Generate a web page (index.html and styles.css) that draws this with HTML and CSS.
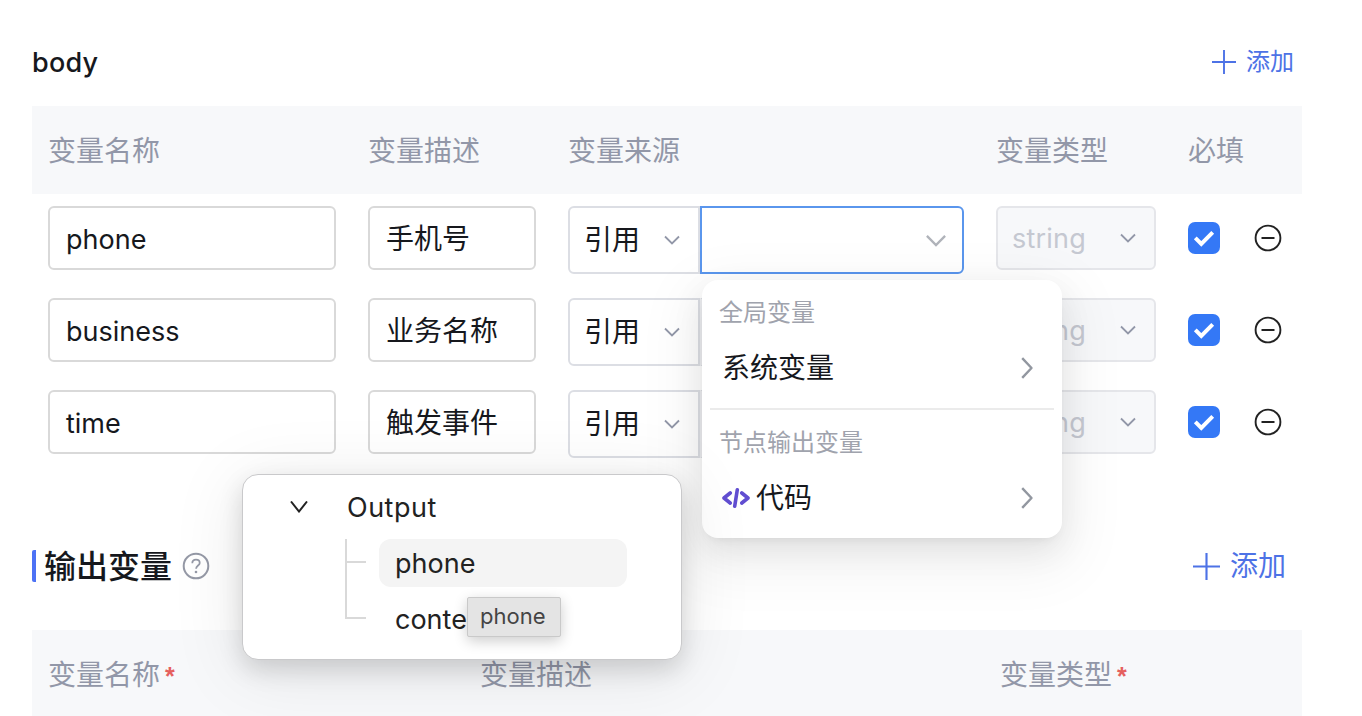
FILE: index.html
```html
<!DOCTYPE html>
<html lang="zh-CN">
  <head>
    <meta charset="utf-8">
    <title>输出变量</title>
    <link rel="stylesheet" href="styles.css">
  </head>
  <body>
    <svg width="0" height="0" class="sprite">
      <symbol id="down" viewBox="0 0 16 10"><path d="M1 1.5l7 7 7-7" fill="none" stroke="currentColor" stroke-width="1.8"/></symbol>
      <symbol id="right" viewBox="0 0 12 22"><path d="M1.2 1.2L10.5 11l-9.3 9.8" fill="none" stroke="currentColor" stroke-width="2.4" stroke-linejoin="round"/></symbol>
      <symbol id="plus" viewBox="0 0 24 24"><path d="M12 0v24M0 12h24" fill="none" stroke="currentColor" stroke-width="1.9"/></symbol>
      <symbol id="check" viewBox="0 0 32 32"><path d="M7.3 15.8l6 6L24.700 10.400" fill="none" stroke="#fff" stroke-width="4"/></symbol>
      <symbol id="minus" viewBox="0 0 28 28"><circle cx="14" cy="14" r="12.400" fill="none" stroke="currentColor" stroke-width="1.9"/><path d="M7.500 14h13" stroke="currentColor" stroke-width="2"/></symbol>
    </svg>

    <div class="section-head">
      <span class="name">body</span>
      <a class="add"><svg><use href="#plus"/></svg>添加</a>
    </div>
    <div class="grid thead">
      <div>变量名称</div><div>变量描述</div><div>变量来源</div><div>变量类型</div><div>必填</div><div></div>
    </div>
    <div class="grid row">
      <div><div class="input">phone</div></div>
      <div><div class="input zh">手机号</div></div>
      <div class="group">
        <div class="select kind">引用<svg class="down"><use href="#down"/></svg></div>
        <div class="select ref active"><svg class="down"><use href="#down"/></svg></div>
      </div>
      <div><div class="input type">string<svg class="down"><use href="#down"/></svg></div></div>
      <div><svg class="checkbox"><use href="#check"/></svg></div>
      <div><svg class="minus"><use href="#minus"/></svg></div>
    </div>
    <div class="grid row">
      <div><div class="input">business</div></div>
      <div><div class="input zh">业务名称</div></div>
      <div class="group">
        <div class="select kind">引用<svg class="down"><use href="#down"/></svg></div>
        <div class="select ref"></div>
      </div>
      <div><div class="input type">string<svg class="down"><use href="#down"/></svg></div></div>
      <div><svg class="checkbox"><use href="#check"/></svg></div>
      <div><svg class="minus"><use href="#minus"/></svg></div>
    </div>
    <div class="grid row">
      <div><div class="input">time</div></div>
      <div><div class="input zh">触发事件</div></div>
      <div class="group">
        <div class="select kind">引用<svg class="down"><use href="#down"/></svg></div>
        <div class="select ref"></div>
      </div>
      <div><div class="input type">string<svg class="down"><use href="#down"/></svg></div></div>
      <div><svg class="checkbox"><use href="#check"/></svg></div>
      <div><svg class="minus"><use href="#minus"/></svg></div>
    </div>

    <div class="section-head output">
      <h2>输出变量</h2>
      <svg class="help" viewBox="0 0 28 28"><circle cx="14" cy="14" r="12.300" fill="none" stroke="currentColor" stroke-width="2"/><path d="M10.300 11.300c0-2.300 1.600-3.700 3.700-3.700s3.700 1.400 3.700 3.300c0 2.700-3.600 2.700-3.600 5.900" fill="none" stroke="currentColor" stroke-width="1.800"/><circle cx="14" cy="20" r="1.300" fill="currentColor"/></svg>
      <a class="add"><svg><use href="#plus"/></svg>添加</a>
    </div>
    <div class="grid thead out">
      <div>变量名称<i>*</i></div><div>变量描述</div><div>变量类型<i>*</i></div>
    </div>

    <div class="menu">
      <div class="label">全局变量</div>
      <div class="item">系统变量<svg class="right"><use href="#right"/></svg></div>
      <hr>
      <div class="label">节点输出变量</div>
      <div class="item">
        <svg class="code" viewBox="0 0 28 20"><path d="M8.200 5L2 10l6.200 5M19.800 5L26 10l-6.200 5M15.300 1.800l-2.600 16.400" fill="none" stroke="currentColor" stroke-width="3.600" stroke-linecap="round" stroke-linejoin="round"/></svg>代码<svg class="right"><use href="#right"/></svg>
      </div>
    </div>

    <div class="tree">
      <div class="node root"><svg viewBox="0 0 18 12"><path d="M1 .5l8 10 8-10" fill="none" stroke="currentColor" stroke-width="2"/></svg>Output</div>
      <div class="children">
        <div class="node"><span class="hover">phone</span></div>
        <div class="node last"><span>conte</span></div>
      </div>
      <div class="tooltip">phone</div>
    </div>
  </body>
</html>
```
FILE: styles.css
```css
* { box-sizing: border-box; }
body { margin: 0; padding: 18px 60px 0 32px; height: 716px; overflow: hidden; position: relative; background: #fff; color: #16181d; font: 27px/44px Inter, "Noto Sans CJK SC", sans-serif; }
svg { display: block; flex: none; }
.sprite { position: absolute; }

.section-head { display: flex; align-items: center; height: 88px; }
.name { font-weight: 500; padding-top: 2px; letter-spacing: .2px; }
.add { display: flex; align-items: center; gap: 10px; margin-left: auto; padding-right: 8px; color: #4d72e6; font-size: 24px; line-height: 46px; }
.add svg { width: 24px; height: 24px; }
.output { height: 128px; margin-top: 32px; }
.output h2 { margin: 0; font-size: 32px; line-height: 34px; height: 32px; font-weight: 500; border-left: 4px solid #4d72f5; border-radius: 2px; padding-left: 8px; }
.output .add { font-size: 28px; padding-right: 16px; }
.output .add svg { width: 27px; height: 27px; }
.help { width: 28px; height: 28px; margin-left: 10px; color: #9599a6; }

.grid { display: grid; grid-template-columns: 320px 200px 428px 192px 66px 64px; }
.grid > div { padding: 0 16px; }
.thead { height: 88px; background: #f7f8fa; color: #9297a8; font-size: 28px; line-height: 90px; }
.thead > div { height: 88px; white-space: nowrap; }
.out { grid-template-columns: 432px 520px 1fr; }
.thead i { color: #e5605e; font: bold 25px "Liberation Sans", sans-serif; margin-left: 5px; }
.row { height: 92px; padding-top: 12px; }
.input { height: 64px; border: 2px solid #d9d9d9; border-radius: 6px; padding: 0 16px; line-height: 64px; }
.zh, .kind { font-size: 28px; }
.zh { line-height: 62px; }
.type { display: flex; justify-content: space-between; padding: 0 18px 0 14px; background: #f7f8fa; border-color: #e5e6ea; color: #c5c8d1; line-height: 62px; letter-spacing: .2px; }
.type .down { margin-top: 25px; }
.down { width: 16px; height: 10px; color: #9297a8; }
.row .group { display: flex; }
.select { display: flex; align-items: center; justify-content: space-between; height: 68px; border: 2px solid #dcdee4; }
.kind { width: 132px; padding: 0 18px 0 14px; border-radius: 6px 0 0 6px; }
.ref { width: 264px; border-left-color: #eeeff2; border-radius: 0 6px 6px 0; padding: 0 15px; }
.active { border-color: #5a96ed; justify-content: flex-end; }
.active .down { width: 22px; height: 13px; color: #b0b3ba; }
.checkbox { width: 32px; height: 32px; margin-top: 16px; border-radius: 7px; background: #3478f6; }
.minus { width: 28px; height: 28px; margin-top: 18px; color: #222; }

.menu { position: absolute; left: 702px; top: 280px; width: 360px; height: 258px; padding: 8px; border-radius: 16px; background: #fff; box-shadow: 0 12px 32px rgba(0, 0, 0, .08), 0 6px 12px -8px rgba(0, 0, 0, .12), 0 18px 56px 16px rgba(0, 0, 0, .05); }
.label { padding: 0 9px; height: 50px; line-height: 50px; font-size: 24px; color: #a0a3ad; }
.item { display: flex; align-items: center; height: 62px; padding: 0 20px 2px 12px; font-size: 28px; }
.menu hr { margin: 8px 0; border: 0; height: 2px; background: #ebebeb; }
.right { width: 14px; height: 22px; margin-left: auto; color: #9297a0; }
.code { width: 28px; height: 20px; margin-right: 6px; color: #614ed1; }

.tree { position: absolute; left: 242px; top: 474px; width: 440px; height: 186px; padding: 5px 54px 0 104px; border: 1px solid #c9c9cb; border-radius: 16px; background: #fff; color: #222; box-shadow: 0 10px 24px rgba(0, 0, 0, .14), 0 10px 70px 6px rgba(0, 0, 0, .08); }
.node { position: relative; height: 56px; line-height: 56px; }
.root { letter-spacing: .5px; }
.root svg { position: absolute; left: -57px; top: 21px; width: 18px; height: 12px; }
.children .node { padding-left: 32px; }
.node span { display: block; height: 48px; line-height: 50px; padding: 0 16px; border-radius: 12px; position: relative; top: 3px; }
.hover { background: #f4f4f4; }
.children .node::before { content: ""; position: absolute; left: -2px; top: 3px; width: 2px; height: 56px; background: #d9d9d9; }
.children .last::before { top: 0; height: 26px; }
.children .node::after { content: ""; position: absolute; left: -2px; top: 25px; width: 21px; height: 2px; background: #d9d9d9; }
.tooltip { position: absolute; left: 224px; top: 122px; width: 94px; height: 40px; border: 1px solid #c9c9c9; border-radius: 2px; background: #e4e4e4; color: #444; font-size: 22px; line-height: 36px; padding-left: 12px; box-shadow: 0 4px 14px rgba(0, 0, 0, .2); }
```
